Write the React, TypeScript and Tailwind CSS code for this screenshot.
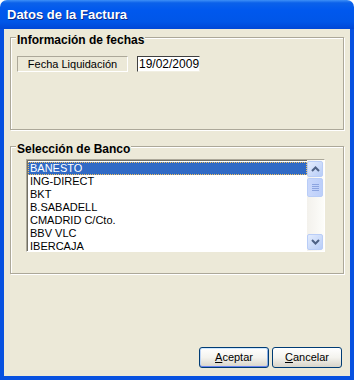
import React from "react";

const banks = ["BANESTO", "ING-DIRECT", "BKT", "B.SABADELL", "CMADRID C/Cto.", "BBV VLC", "IBERCAJA"];

function Chevron({ up }: { up?: boolean }) {
  return (
    <svg width="9" height="6" viewBox="0 0 9 6">
      <path
        d={up ? "M1 5 L4.5 1.5 L8 5" : "M1 1 L4.5 4.5 L8 1"}
        fill="none"
        stroke="#4d6185"
        strokeWidth="2"
      />
    </svg>
  );
}

function ScrollButton({ up }: { up?: boolean }) {
  return (
    <div className="h-[16px] w-[16px] rounded-[2px] border border-[#b9cdf7] bg-gradient-to-br from-[#e3ecfd] to-[#b8cdf7] flex items-center justify-center">
      <Chevron up={up} />
    </div>
  );
}

function GroupBox({ title, className, children }: { title: string; className: string; children: React.ReactNode }) {
  return (
    <div className={`relative border border-[#aca899] shadow-[1px_1px_0_#fff,inset_1px_1px_0_#fff] ${className}`}>
      <div className="absolute -top-[5px] left-[5px] bg-[#ece9d8] px-[1px] text-[12px] leading-[14px] font-bold text-black">
        {title}
      </div>
      {children}
    </div>
  );
}

export default function App() {
  return (
    <div className="w-[354px] h-[380px] bg-white font-['Liberation_Sans',Arial,sans-serif] text-black">
      <div className="flex flex-col h-full rounded-t-[7px] overflow-hidden">
        {/* title bar */}
        <div className="h-[29px] shrink-0 flex items-center pl-[7px] pt-[1px] bg-[linear-gradient(to_bottom,#3d8ff7_0%,#0b61ea_10%,#0058ee_35%,#0056e8_75%,#0047d6_100%)]">
          <span className="text-white font-bold text-[13px] [text-shadow:1px_1px_0_#0a2c8a]">Datos de la Factura</span>
        </div>

        <div className="flex-1 flex bg-[#0751e0] px-[4px] pb-[4px]">
          <div className="flex-1 flex flex-col bg-[#ece9d8] pt-[8px] px-[6px] pb-[8px]">
            <GroupBox title="Información de fechas" className="h-[93px] shrink-0">
              <div className="flex items-start gap-[9px] pt-[18px] pl-[6px]">
                <div className="w-[111px] h-[16px] flex items-center justify-center border border-t-[#aca899] border-l-[#aca899] border-b-white border-r-white text-[11px]">
                  Fecha Liquidación
                </div>
                <div className="w-[63px] h-[16px] flex items-center pl-[1px] bg-white border border-t-[#404040] border-l-[#404040] border-b-[#f1efe2] border-r-[#f1efe2] text-[12px]">
                  19/02/2009
                </div>
              </div>
            </GroupBox>

            <GroupBox title="Selección de Banco" className="h-[128px] shrink-0 mt-[16px]">
              <div className="pt-[12px] pl-[15px]">
                <div className="w-[299px] h-[93px] flex bg-white border border-t-[#aca899] border-l-[#aca899] border-b-white border-r-white shadow-[inset_1px_1px_0_#716f64]">
                  <div className="flex-1 pt-[2px] pl-[1px]">
                    {banks.map((b, i) => (
                      <div
                        key={b}
                        className={`h-[13px] leading-[13px] text-[11px] pl-[2px] ${
                          i === 0 ? "bg-[#316ac5] text-white outline outline-1 outline-dotted outline-[#f0c060] -outline-offset-1" : ""
                        }`}
                      >
                        {b}
                      </div>
                    ))}
                  </div>
                  <div className="w-[17px] flex flex-col pt-[1px] pb-[1px] bg-gradient-to-r from-[#f3f1ec] to-[#fdfdfa]">
                    <ScrollButton up />
                    <div className="flex-1 pt-[1px]">
                      <div className="h-[19px] w-[16px] rounded-[2px] border border-[#b9cdf7] bg-gradient-to-r from-[#cad8fb] to-[#bccffa] flex flex-col items-center justify-center gap-[1px]">
                        <div className="w-[7px] h-[1px] bg-[#8ca4e0]" />
                        <div className="w-[7px] h-[1px] bg-[#8ca4e0]" />
                        <div className="w-[7px] h-[1px] bg-[#8ca4e0]" />
                        <div className="w-[7px] h-[1px] bg-[#8ca4e0]" />
                      </div>
                    </div>
                    <ScrollButton />
                  </div>
                </div>
              </div>
            </GroupBox>

            <div className="flex-1" />

            <div className="flex justify-end gap-[3px] pr-[2px]">
              <button className="w-[70px] h-[21px] rounded-[3px] border border-[#003c74] bg-gradient-to-b from-white via-[#f4f3ee] to-[#d8d4c9] shadow-[inset_0_1px_0_#cee7ff,inset_0_-1px_0_#6982ee,inset_1px_0_0_#bcd4f6,inset_-1px_0_0_#89ade4] text-[11px] leading-none">
                <span className="underline">A</span>ceptar
              </button>
              <button className="w-[70px] h-[21px] rounded-[3px] border border-[#003c74] bg-gradient-to-b from-white via-[#f4f3ee] to-[#d8d4c9] text-[11px] leading-none">
                <span className="underline">C</span>ancelar
              </button>
            </div>
          </div>
        </div>
      </div>
    </div>
  );
}
